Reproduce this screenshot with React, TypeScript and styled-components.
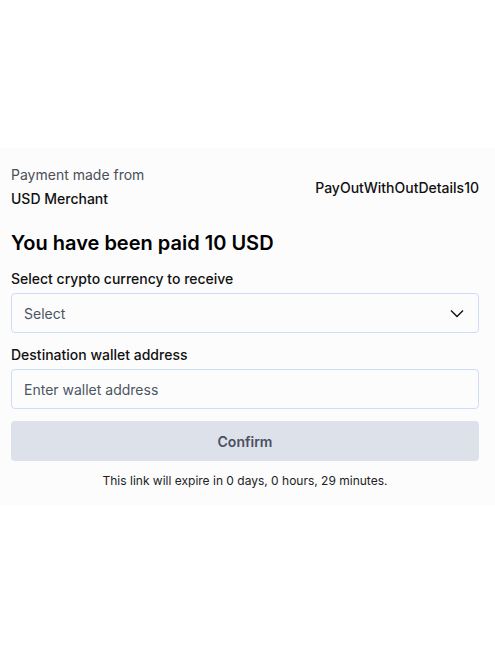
import * as React from 'react'
import styled, { createGlobalStyle } from 'styled-components'

const GlobalStyle = createGlobalStyle`
  html, body {
    margin: 0;
    padding: 0;
    background: #ffffff;
    font-family: Inter, "Noto Sans", sans-serif;
    color: #111827;
  }
  * {
    box-sizing: border-box;
  }
`

const Card = styled.div`
  margin-top: 148px;
  background: #fcfcfc;
  padding: 15px 16px 16px 11px;
  display: flex;
  flex-direction: column;
`

const Header = styled.div`
  display: flex;
  align-items: center;
  justify-content: space-between;
`

const From = styled.div`
  display: flex;
  flex-direction: column;
  font-size: 14px;
  line-height: 24px;
`

const Muted = styled.span`
  color: #4b4f58;
`

const Merchant = styled.span`
  font-weight: 500;
  color: #111111;
`

const Reference = styled.span`
  font-size: 14px;
  font-weight: 500;
  color: #111111;
`

const Title = styled.h1`
  margin: 18px 0 12px;
  font-size: 20px;
  line-height: 28px;
  font-weight: 600;
  color: #000000;
`

const Label = styled.label`
  display: block;
  font-size: 14px;
  line-height: 20px;
  font-weight: 500;
  color: #111111;
  margin-bottom: 4px;
`

const Field = styled.div`
  display: flex;
  align-items: center;
  justify-content: space-between;
  height: 40px;
  padding: 0 13px 0 12px;
  border: 1px solid #cfdcf8;
  border-radius: 4px;
  background: #fcfcfc;
  font-size: 14px;
  color: #4b5563;
  margin-bottom: 12px;
`

const Input = styled.input`
  height: 40px;
  width: 100%;
  padding: 0 12px;
  border: 1px solid #cfdcf8;
  border-radius: 4px;
  background: #fcfcfc;
  font-family: inherit;
  font-size: 14px;
  outline: none;
  margin-bottom: 12px;
  &::placeholder {
    color: #4b5563;
  }
`

const Button = styled.button`
  height: 40px;
  width: 100%;
  border: none;
  border-radius: 4px;
  background: #dde1ea;
  font-family: inherit;
  font-size: 14px;
  font-weight: 600;
  color: #4b5060;
`

const Expiry = styled.p`
  margin: 12px 0 0;
  text-align: center;
  font-size: 12px;
  line-height: 16px;
  color: #222222;
`

const Chevron = () => (
  <svg width="16" height="16" viewBox="0 0 16 16" fill="none">
    <path d="M2 5.5l6 6 6-6" stroke="#111" strokeWidth="1.4" />
  </svg>
)

export default function App() {
  return (
    <>
      <GlobalStyle />
      <Card>
        <Header>
          <From>
            <Muted>Payment made from</Muted>
            <Merchant>USD Merchant</Merchant>
          </From>
          <Reference>PayOutWithOutDetails10</Reference>
        </Header>
        <Title>You have been paid 10 USD</Title>
        <Label>Select crypto currency to receive</Label>
        <Field>
          <span>Select</span>
          <Chevron />
        </Field>
        <Label>Destination wallet address</Label>
        <Input placeholder="Enter wallet address" />
        <Button>Confirm</Button>
        <Expiry>This link will expire in 0 days, 0 hours, 29 minutes.</Expiry>
      </Card>
    </>
  )
}
